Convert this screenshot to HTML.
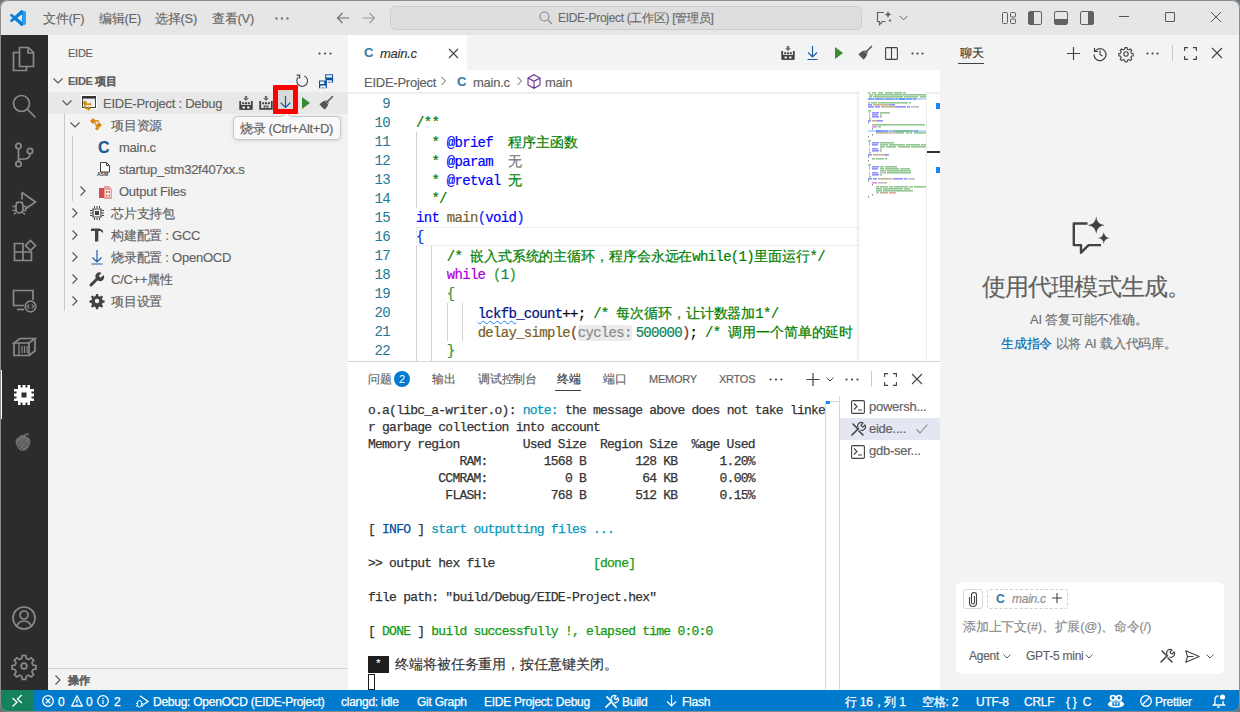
<!DOCTYPE html>
<html><head><meta charset="utf-8">
<style>
*{margin:0;padding:0;box-sizing:border-box}
html,body{width:1240px;height:712px;overflow:hidden;background:#fff;font-family:"Liberation Sans",sans-serif;font-size:13px;color:#616161}
.a{position:absolute}
.t{position:absolute;white-space:nowrap;line-height:1;letter-spacing:-0.25px;-webkit-text-stroke:0.15px}
svg{position:absolute;overflow:visible}
#title{left:0;top:0;width:1240px;height:35px;background:#e6e6e6}
#act{left:0;top:35px;width:48px;height:655px;background:#2c2c2c}
#side{left:48px;top:35px;width:300px;height:655px;background:#f3f3f3}
#tabs{left:348px;top:35px;width:592px;height:35px;background:#f3f3f3}
#editor{left:348px;top:70px;width:592px;height:292px;background:#fff}
#panel{left:348px;top:361px;width:592px;height:329px;background:#fff;border-top:1px solid #d4d4d4}
#chat{left:940px;top:35px;width:300px;height:655px;background:#f3f3f3}
#status{left:0;top:690px;width:1240px;height:22px;background:#007acc;color:#fff}
.ln{position:absolute;margin-top:1px;left:0;width:42px;text-align:right;font-family:"Liberation Mono",monospace;font-size:14px;line-height:19px;letter-spacing:-0.7px;white-space:pre}
.code{position:absolute;margin-top:1px;-webkit-text-stroke:0.2px;left:68px;font-family:"Liberation Mono",monospace;font-size:14px;line-height:19px;letter-spacing:-0.7px;white-space:pre;color:#000}
.cj{letter-spacing:-0.1px;font-family:"Liberation Sans",sans-serif}
.term{position:absolute;margin-top:1px;-webkit-text-stroke:0.25px;left:20px;font-family:"Liberation Mono",monospace;font-size:13px;line-height:17px;letter-spacing:-0.77px;white-space:pre;color:#333}
.mono{font-family:"Liberation Mono",monospace}
</style></head><body>
<div class="a" id="title">
<svg style="left:10px;top:10px" width="16" height="16" viewBox="0 0 100 100"><path fill="#0a80d8" d="M96.5 10.8 75.9.9a6.2 6.2 0 0 0-7.1 1.2L29.4 38 12.2 25a4.1 4.1 0 0 0-5.3.2L1.4 30.3a4.1 4.1 0 0 0 0 6.1L16.3 50 1.4 63.6a4.1 4.1 0 0 0 0 6.1l5.5 5a4.1 4.1 0 0 0 5.3.2l17.2-13L68.8 97.9a6.2 6.2 0 0 0 7.1 1.2l20.6-9.9a6.2 6.2 0 0 0 3.5-5.6V16.4a6.2 6.2 0 0 0-3.5-5.6zM75 72.7 45.1 50 75 27.3z"/><path fill="#007acc" d="M96.5 10.8 75.9.9a6.2 6.2 0 0 0-7.1 1.2L29.4 38 12.2 25a4.1 4.1 0 0 0-5.3.2L1.4 30.3a4.1 4.1 0 0 0 0 6.1L16.3 50 1.4 63.6a4.1 4.1 0 0 0 0 6.1l5.5 5a4.1 4.1 0 0 0 5.3.2l17.2-13L68.8 97.9a6.2 6.2 0 0 0 7.1 1.2l20.6-9.9a6.2 6.2 0 0 0 3.5-5.6V16.4a6.2 6.2 0 0 0-3.5-5.6zM75 72.7 45.1 50 75 27.3z" opacity=".0"/><path fill="#24a4f3" d="M75.9 99.1a6.2 6.2 0 0 0 3.5-.9V1.8a6.2 6.2 0 0 0-3.5-.9l20.6 9.9a6.2 6.2 0 0 1 3.5 5.6v67.2a6.2 6.2 0 0 1-3.5 5.6z"/></svg>
<div class="t" style="left:43px;top:12px;color:#666">文件(F)</div>
<div class="t" style="left:99px;top:12px;color:#666">编辑(E)</div>
<div class="t" style="left:155px;top:12px;color:#666">选择(S)</div>
<div class="t" style="left:212px;top:12px;color:#666">查看(V)</div>
<svg style="left:275px;top:17px" width="14" height="3"><circle cx="1.5" cy="1.5" r="1.2" fill="#777"/><circle cx="7" cy="1.5" r="1.2" fill="#777"/><circle cx="12.5" cy="1.5" r="1.2" fill="#777"/></svg>
<svg style="left:336px;top:11px" width="14" height="14" viewBox="0 0 14 14"><path d="M13 7H1.5M6.5 2 1.5 7l5 5" fill="none" stroke="#6b6b6b" stroke-width="1.1"/></svg>
<svg style="left:362px;top:11px" width="14" height="14" viewBox="0 0 14 14"><path d="M1 7h11.5M7.5 2l5 5-5 5" fill="none" stroke="#9a9a9a" stroke-width="1.1"/></svg>
<div class="a" style="left:390px;top:6px;width:472px;height:24px;border:1px solid #cdcdcd;border-radius:6px;background:#dedede"></div>
<svg style="left:539px;top:11px" width="14" height="14" viewBox="0 0 14 14"><circle cx="5.5" cy="5.5" r="4.5" fill="none" stroke="#888" stroke-width="1.1"/><path d="M8.8 8.8 13 13" stroke="#888" stroke-width="1.2"/></svg>
<div class="t" style="left:558px;top:12px;color:#6a6a6a;font-size:12px;letter-spacing:-0.3px">EIDE-Project (工作区) [管理员]</div>
<svg style="left:876px;top:10px" width="17" height="16" viewBox="0 0 17 16"><path d="M8 2.5H1.5v9h2v3l3-3H9.5" fill="none" stroke="#616161" stroke-width="1.2"/><path d="M12 1l1 2.5 2.5 1-2.5 1-1 2.5-1-2.5L8.5 4.5l2.5-1z" fill="#616161"/><path d="M14 8.5l.6 1.4 1.4.6-1.4.6-.6 1.4-.6-1.4-1.4-.6 1.4-.6z" fill="#616161"/></svg>
<svg style="left:899px;top:15px" width="9" height="6" viewBox="0 0 9 6"><path d="M.5 .8 4.5 4.8 8.5.8" fill="none" stroke="#616161" stroke-width="1"/></svg>
<svg style="left:1002px;top:12px" width="14" height="12" viewBox="0 0 14 12"><rect x=".5" y=".5" width="5" height="11" rx="1" fill="none" stroke="#616161"/><rect x="8.5" y=".5" width="5" height="4.5" rx="1" fill="none" stroke="#616161"/><rect x="8.5" y="7" width="5" height="4.5" rx="1" fill="none" stroke="#616161"/></svg>
<svg style="left:1028px;top:11px" width="14" height="14" viewBox="0 0 14 14"><rect x=".5" y=".5" width="13" height="13" rx="1.5" fill="none" stroke="#616161"/><rect x="1" y="1" width="5" height="12" fill="#616161"/></svg>
<svg style="left:1054px;top:11px" width="14" height="14" viewBox="0 0 14 14"><rect x=".5" y=".5" width="13" height="13" rx="1.5" fill="none" stroke="#616161"/><rect x="1" y="8" width="12" height="5" fill="#616161"/></svg>
<svg style="left:1080px;top:11px" width="14" height="14" viewBox="0 0 14 14"><rect x=".5" y=".5" width="13" height="13" rx="1.5" fill="none" stroke="#616161"/><rect x="8" y="1" width="5" height="12" fill="#616161"/></svg>
<div class="a" style="left:1119px;top:16px;width:10px;height:1px;background:#555"></div>
<div class="a" style="left:1165px;top:12px;width:10px;height:10px;border:1px solid #555;border-radius:1px"></div>
<svg style="left:1211px;top:12px" width="10" height="10" viewBox="0 0 10 10"><path d="M0 0 10 10M10 0 0 10" stroke="#555" stroke-width="1"/></svg>
</div>
<div class="a" id="act">
<svg style="left:12px;top:11px" width="24" height="26" viewBox="0 0 24 26"><path d="M7.5 6.5H1.5v18h13v-4" fill="none" stroke="#8a8a8a" stroke-width="1.7"/><path d="M7.5 1.5h9l5 5v14h-14z" fill="none" stroke="#8a8a8a" stroke-width="1.7"/><path d="M16 1.5v5.5h5.5" fill="none" stroke="#8a8a8a" stroke-width="1.7"/></svg>
<svg style="left:12px;top:59px" width="25" height="25" viewBox="0 0 25 25"><circle cx="9.5" cy="9.5" r="8" fill="none" stroke="#8a8a8a" stroke-width="1.7"/><path d="M15.2 15.2 23.5 23.5" fill="none" stroke="#8a8a8a" stroke-width="1.7" stroke-width="2"/></svg>
<svg style="left:12px;top:107px" width="24" height="26" viewBox="0 0 24 26"><circle cx="6.5" cy="4" r="2.7" fill="none" stroke="#8a8a8a" stroke-width="1.7"/><circle cx="6.5" cy="22" r="2.7" fill="none" stroke="#8a8a8a" stroke-width="1.7"/><circle cx="18" cy="9" r="2.7" fill="none" stroke="#8a8a8a" stroke-width="1.7"/><path d="M6.5 6.7v12.6M18 11.7c0 4-3 5.3-6 5.3h-2c-2 0-3.5 1-3.5 2.3" fill="none" stroke="#8a8a8a" stroke-width="1.7"/></svg>
<svg style="left:11px;top:156px" width="26" height="26" viewBox="0 0 26 26"><path d="M11 1.5l13.5 9.5-10.5 7.2" fill="none" stroke="#8a8a8a" stroke-width="1.7"/><path d="M11 1.5v7" fill="none" stroke="#8a8a8a" stroke-width="1.7"/><path d="M5 14.5a3.5 3.5 0 0 1 7 0v4a3.5 3.5 0 0 1-7 0z" fill="none" stroke="#8a8a8a" stroke-width="1.7"/><path d="M6.5 12.5l-1.5-1.5M10.5 12.5l1.5-1.5M1.5 15.5h3.5M12 15.5h3.5M1.5 19.5h3.5M12 19.5h3.5M3 23.5l2-2M14 23.5l-2-2" fill="none" stroke="#8a8a8a" stroke-width="1.7"/></svg>
<svg style="left:13px;top:204px" width="24" height="24" viewBox="0 0 24 24"><path d="M1.5 4.5h8.5v8.5h-8.5zM1.5 13h8.5v8.5h-8.5zM10 13h8.5v8.5h-8.5z" fill="none" stroke="#8a8a8a" stroke-width="1.7"/><path d="M17.5 1.5l5 5-5 5-5-5z" fill="none" stroke="#8a8a8a" stroke-width="1.7"/></svg>
<svg style="left:12px;top:253px" width="25" height="25" viewBox="0 0 25 25"><path d="M21 12V2.5H1.5v15H12" fill="none" stroke="#8a8a8a" stroke-width="1.7"/><path d="M5 21.5h7" fill="none" stroke="#8a8a8a" stroke-width="1.7"/><circle cx="18.5" cy="18.5" r="5.3" fill="none" stroke="#8a8a8a" stroke-width="1.7"/><path d="M17.3 16.5l-2 2 2 2M19.7 16.5l2 2-2 2" fill="none" stroke="#8a8a8a" stroke-width="1.1"/></svg>
<svg style="left:13px;top:302px" width="23" height="20" viewBox="0 0 23 20"><path d="M1 6l6-4.5h15l-6 4.5z M1 6v12.5h15V6 M16 18.5l6-4.5V1.5" fill="none" stroke="#8a8a8a" stroke-width="1.7"/><path d="M6 6v12.5M9 9v7M11.5 9v7M14 9v7" fill="none" stroke="#8a8a8a" stroke-width="1.2"/></svg>
<div class="a" style="left:0;top:335px;width:2px;height:49px;background:#fff"></div>
<svg style="left:12px;top:348px" width="24" height="24" viewBox="0 0 24 24"><path fill="#fff" fill-rule="evenodd" d="M6 2h2.6v2.5h1.9V2h3v2.5h1.9V2H18v4h4v2.6h-2.5v1.9H22v3h-2.5v1.9H22V18h-4v4h-2.6v-2.5h-1.9V22h-3v-2.5H8.6V22H6v-4H2v-2.6h2.5v-1.9H2v-3h2.5V8.6H2V6h4z M9.5 9.5v5h5v-5z"/></svg>
<svg style="left:14px;top:398px" width="18" height="19" viewBox="0 0 18 19"><path d="M5 4c2-3 6-3 8 0 3 1 4 4 3 7-1 4-4 7-7 7s-6-3-7-7c-1-3 0-6 3-7z" fill="#6e6e6e"/><path d="M9 4c1-2 3-3 6-3" stroke="#6e6e6e" stroke-width="1.5" fill="none"/><path d="M4 8l9 8M7 6l8 7M3 12l6 5M8 6l-5 6M12 6l-8 9M15 8l-8 9" stroke="#4a4a4a" stroke-width=".7"/></svg>
<svg style="left:12px;top:571px" width="24" height="24" viewBox="0 0 24 24"><circle cx="12" cy="12" r="11" fill="none" stroke="#8a8a8a" stroke-width="1.7"/><circle cx="12" cy="9" r="4" fill="none" stroke="#8a8a8a" stroke-width="1.7"/><path d="M5 19.5c1.5-3 4-4.5 7-4.5s5.5 1.5 7 4.5" fill="none" stroke="#8a8a8a" stroke-width="1.7"/></svg>
<svg style="left:12px;top:619px" width="24" height="24" viewBox="0 0 24 24"><path d="M10.3 1.5h3.4l.6 3 2.3 1 2.6-1.7 2.4 2.4-1.7 2.6 1 2.3 3 .6v3.4l-3 .6-1 2.3 1.7 2.6-2.4 2.4-2.6-1.7-2.3 1-.6 3h-3.4l-.6-3-2.3-1-2.6 1.7-2.4-2.4 1.7-2.6-1-2.3-3-.6v-3.4l3-.6 1-2.3-1.7-2.6 2.4-2.4 2.6 1.7 2.3-1z" fill="none" stroke="#8a8a8a" stroke-width="1.7"/><circle cx="12" cy="12" r="2.8" fill="none" stroke="#8a8a8a" stroke-width="1.7"/></svg></div>
<div class="a" id="side">
<div class="t" style="left:20px;top:13px;font-size:11px;color:#616161">EIDE</div>
<svg style="left:270px;top:17px" width="14" height="3"><circle cx="1.5" cy="1.5" r="1.1" fill="#424242"/><circle cx="7" cy="1.5" r="1.1" fill="#424242"/><circle cx="12.5" cy="1.5" r="1.1" fill="#424242"/></svg>
<svg style="left:4px;top:40px" width="12" height="12" viewBox="0 0 12 12"><path d="M1.5 3.5 6 8l4.5-4.5" fill="none" stroke="#555" stroke-width="1.15"/></svg>
<div class="t" style="left:20px;top:41px;font-size:11px;font-weight:bold;color:#616161">EIDE 项目</div>
<svg style="left:247px;top:39px" width="14" height="14" viewBox="0 0 14 14"><path d="M9.2 1.9A5.4 5.4 0 1 1 3.3 3.2" fill="none" stroke="#424242" stroke-width="1.1"/><path d="M1.6 1.2H4.6V4.4" fill="none" stroke="#424242" stroke-width="1.3"/></svg>
<svg style="left:271px;top:39px" width="15" height="15" viewBox="0 0 15 15"><path fill="#0a4fa0" d="M6.1.3h8v8.3h-8z"/><path fill="#f3f3f3" d="M7.1 1.3h6v2.2h-6zM7.4 6.2h5.4v2.4H7.4z"/><circle cx="10.1" cy="8.1" r=".6" fill="#0a4fa0"/><path fill="#f3f3f3" d="M-.5 5.4h7.6v1h1.6v9H-.5z"/><path fill="#0a4fa0" d="M0 6.4h5.2v1H1v2.5h6.9v4.4H0z"/><path fill="#0a4fa0" d="M5.2 6.4H8v3.5H5.2z"/><path fill="#f3f3f3" d="M1.3 11.5h5.4v2.8H1.3z"/><circle cx="4" cy="13.6" r=".6" fill="#0a4fa0"/></svg>
<div class="a" style="left:0;top:57px;width:300px;height:22px;background:#e8e8e8"></div>
<svg style="left:13px;top:62px" width="12" height="12" viewBox="0 0 12 12"><path d="M1.5 3.5 6 8l4.5-4.5" fill="none" stroke="#555" stroke-width="1.15"/></svg>
<svg style="left:33px;top:60px" width="16" height="17" viewBox="0 0 16 17"><rect x="0" y="0" width="16" height="14.5" fill="#fff"/><rect x="1.5" y="1.5" width="13" height="11" fill="#eee" stroke="#424242" stroke-width="1"/><rect x="1" y="1" width="14" height="2.6" fill="#333"/><path d="M4 5.6 6.3 7.9 4 10.2 1.7 7.9z M7.7 11.3 9.9 13.5 7.7 15.7 5.5 13.5z" fill="#d7870b"/><path d="M4 8v3.5c0 1.2 1 2 2 2h1.5M5 9.2h4.8" fill="none" stroke="#d7870b" stroke-width="1.6"/><path d="M8.6 7.6l2 1.6-2 1.6z" fill="#d7870b"/></svg>
<div class="t" style="left:55px;top:62px;color:#616161">EIDE-Project : Debug</div>
<svg style="left:191px;top:61px" width="14" height="14" viewBox="0 0 14 14"><path d="M.3 5h1.8v4.2h9.8V5h1.8v8.8H.3z" fill="#424242"/><path d="M2 9h10v4.8H2z" fill="#424242"/><path d="M3.2 6.2h2v2h-2zM6 6.2h2v2h-2zM8.8 6.2h2v2h-2z" fill="#424242"/><path d="M3.6 10.4h2.2v2.2H3.6zM8.2 10.4h2.2v2.2H8.2z" fill="#fff"/><path d="M5.8 0h2.4v2.3h1.7L7 5 4.1 2.3h1.7z" fill="#6e6e6e"/></svg>
<svg style="left:211px;top:61px" width="14" height="14" viewBox="0 0 14 14"><path d="M.3 5h1.8v7h9.8V5h1.8v8.8H.3z" fill="#424242"/><path d="M3.2 6.2h2v2h-2zM6 6.2h2v2h-2zM8.8 6.2h2v2h-2zM4.6 9.4h2v2h-2zM7.4 9.4h2v2h-2z" fill="#424242"/><path d="M5.8 0h2.4v2.3h1.7L7 5 4.1 2.3h1.7z" fill="#6e6e6e"/></svg>
<div class="a" style="left:230px;top:55px;width:15px;height:19px;background:#d9d9d9"></div>
<svg style="left:232px;top:61px" width="11" height="12" viewBox="0 0 11 12"><path d="M5.5 0v11.5M.7 6.8 5.5 11.5l4.8-4.7" fill="none" stroke="#0e5ba8" stroke-width="1.2"/></svg>
<svg style="left:254px;top:62px" width="8" height="12" viewBox="0 0 8 12"><path d="M0 0 8 6 0 12z" fill="#388a34"/></svg>
<svg style="left:271px;top:61px" width="14" height="14" viewBox="0 0 14 14"><path d="M8.3 5.7 13.5.5" stroke="#555" stroke-width="1.6" stroke-linecap="round"/><path d="M7 4l3 3-.8.8-3-3z" fill="#555"/><path d="M5.8 4.8l3.4 3.4c-.5 2.2-2 4.2-3.8 5.3L.5 8.6C1.6 6.8 3.6 5.3 5.8 4.8z" fill="#555"/></svg>
<svg style="left:21px;top:84px" width="12" height="12" viewBox="0 0 12 12"><path d="M1.5 3.5 6 8l4.5-4.5" fill="none" stroke="#555" stroke-width="1.15"/></svg>
<svg style="left:42px;top:82px" width="14" height="14" viewBox="0 0 14 14"><path d="M3 1l3 3-3 3-3-3z M9 5l3 3-3 3-3-3z M7 9.5l2 2-2 2-2-2z" fill="#d7870b"/><path d="M3 4h6M5 5.5l2 5" stroke="#d7870b" stroke-width="1.3" fill="none"/></svg>
<div class="t" style="left:63px;top:84px;color:#616161">项目资源</div>
<div class="a" style="left:16px;top:78px;width:1px;height:198px;background:#c8c8c8"></div>
<div class="a" style="left:24px;top:101px;width:1px;height:65px;background:#c8c8c8"></div>
<div class="t" style="left:50px;top:105px;font-size:16px;font-weight:bold;color:#1e5b96;letter-spacing:0">C</div>
<div class="t" style="left:71px;top:106px;color:#616161">main.c</div>
<svg style="left:49px;top:127px" width="15" height="14" viewBox="0 0 15 14"><path d="M3.5.5h6l3 3V10h-9z" fill="#fff" stroke="#424242" stroke-width="1"/><path d="M9.5.5V3.5h3" fill="none" stroke="#424242"/><text x="0" y="13.6" font-size="5" font-weight="bold" fill="#424242" font-family="Liberation Sans">ASM</text></svg>
<div class="t" style="left:71px;top:128px;color:#616161">startup_stm32f407xx.s</div>
<svg style="left:29px;top:150px" width="12" height="12" viewBox="0 0 12 12"><path d="M3.5 1.5 8 6l-4.5 4.5" fill="none" stroke="#555" stroke-width="1.15"/></svg>
<svg style="left:51px;top:150px" width="14" height="14" viewBox="0 0 14 14"><path d="M0 3h6v10h-6z" fill="#d84b4b"/><path d="M5 1h5l3 3v10h-8z" fill="#e8a0a0"/><path d="M6.5 5h5v7h-5z" fill="#fff"/><path d="M7.5 6v2M9 6v2M10.5 6v2M7.5 9.5v2M9 9.5v2M10.5 9.5v2" stroke="#c0392b" stroke-width=".8"/></svg>
<div class="t" style="left:71px;top:150px;color:#616161">Output Files</div>
<svg style="left:21px;top:172px" width="12" height="12" viewBox="0 0 12 12"><path d="M3.5 1.5 8 6l-4.5 4.5" fill="none" stroke="#555" stroke-width="1.15"/></svg>
<svg style="left:42px;top:171px" width="14" height="14" viewBox="0 0 14 14"><path d="M3 3h8v8h-8z" fill="none" stroke="#424242" stroke-width="1.2"/><path d="M5 5h4v4h-4z" fill="#424242"/><path d="M4.5 0v2M7 0v2M9.5 0v2M4.5 12v2M7 12v2M9.5 12v2M0 4.5h2M0 7h2M0 9.5h2M12 4.5h2M12 7h2M12 9.5h2" stroke="#424242" stroke-width="1"/></svg>
<div class="t" style="left:63px;top:172px;color:#616161">芯片支持包</div>
<svg style="left:21px;top:194px" width="12" height="12" viewBox="0 0 12 12"><path d="M3.5 1.5 8 6l-4.5 4.5" fill="none" stroke="#555" stroke-width="1.15"/></svg>
<svg style="left:42px;top:193px" width="14" height="14" viewBox="0 0 14 14"><path d="M1 .5h8.5L13 2.5v2.5L10.5 3H8.3v10.5H5V3H1z" fill="#424242"/></svg>
<div class="t" style="left:63px;top:194px;color:#616161">构建配置 : GCC</div>
<svg style="left:21px;top:216px" width="12" height="12" viewBox="0 0 12 12"><path d="M3.5 1.5 8 6l-4.5 4.5" fill="none" stroke="#555" stroke-width="1.15"/></svg>
<svg style="left:42px;top:215px" width="14" height="15" viewBox="0 0 14 15"><path d="M7 0v12M2.5 7.5 7 12l4.5-4.5M1.5 14h11" fill="none" stroke="#1c5ea8" stroke-width="1.2"/></svg>
<div class="t" style="left:63px;top:216px;color:#616161">烧录配置 : OpenOCD</div>
<svg style="left:21px;top:238px" width="12" height="12" viewBox="0 0 12 12"><path d="M3.5 1.5 8 6l-4.5 4.5" fill="none" stroke="#555" stroke-width="1.15"/></svg>
<svg style="left:42px;top:237px" width="14" height="14" viewBox="0 0 14 14"><path d="M1 13 7 7" stroke="#424242" stroke-width="3" stroke-linecap="round"/><path d="M6 6.5a4 4 0 0 1 5.5-5.5l-2.5 2.5 .5 1.5 1.5.5 2.5-2.5a4 4 0 0 1-5.5 5.5z" fill="#424242"/></svg>
<div class="t" style="left:63px;top:238px;color:#616161">C/C++属性</div>
<svg style="left:21px;top:260px" width="12" height="12" viewBox="0 0 12 12"><path d="M3.5 1.5 8 6l-4.5 4.5" fill="none" stroke="#555" stroke-width="1.15"/></svg>
<svg style="left:42px;top:259px" width="14" height="14" viewBox="0 0 14 14"><path d="M6 0h2l.4 2 1.6.7 1.7-1.2 1.4 1.4-1.2 1.7.7 1.6 2 .4v2l-2 .4-.7 1.6 1.2 1.7-1.4 1.4-1.7-1.2-1.6.7-.4 2h-2l-.4-2-1.6-.7-1.7 1.2-1.4-1.4 1.2-1.7-.7-1.6-2-.4v-2l2-.4.7-1.6-1.2-1.7 1.4-1.4 1.7 1.2 1.6-.7z" fill="#424242"/><circle cx="7" cy="7" r="2.2" fill="#f3f3f3"/></svg>
<div class="t" style="left:63px;top:260px;color:#616161">项目设置</div>
<div class="a" style="left:0;top:633px;width:300px;height:1px;background:#d4d4d4"></div>
<svg style="left:4px;top:639px" width="12" height="12" viewBox="0 0 12 12"><path d="M3.5 1.5 8 6l-4.5 4.5" fill="none" stroke="#555" stroke-width="1.15"/></svg>
<div class="t" style="left:20px;top:640px;font-size:11px;font-weight:bold;color:#616161">操作</div>
<div class="a" style="left:185px;top:81px;width:108px;height:24px;background:#f8f8f8;border:1px solid #c8c8c8;border-radius:4px;box-shadow:0 1px 4px rgba(0,0,0,.12)"></div>
<div class="a" style="left:235px;top:78px;width:7px;height:7px;background:#f8f8f8;border-left:1px solid #c8c8c8;border-top:1px solid #c8c8c8;transform:rotate(45deg)"></div>
<div class="t" style="left:192px;top:87px;font-size:13px;letter-spacing:-0.35px;color:#616161">烧录 (Ctrl+Alt+D)</div>
<div class="a" style="left:225px;top:50px;width:25px;height:29px;border:5px solid #f00;border-radius:1px"></div>
</div>
<div class="a" id="tabs">
<div class="a" style="left:0;top:0;width:119px;height:35px;background:#fff"></div>
<div class="t" style="left:16px;top:11px;font-weight:bold;font-size:13px;color:#3c7ea6">C</div>
<div class="t" style="left:32px;top:12px;font-style:italic;color:#333">main.c</div>
<svg style="left:101px;top:14px" width="9" height="9" viewBox="0 0 9 9"><path d="M0 0 9 9M9 0 0 9" stroke="#424242" stroke-width="1.1"/></svg>
<svg style="left:433px;top:11px" width="14" height="14" viewBox="0 0 14 14"><path d="M.3 5h1.8v4.2h9.8V5h1.8v8.8H.3z" fill="#424242"/><path d="M2 9h10v4.8H2z" fill="#424242"/><path d="M3.2 6.2h2v2h-2zM6 6.2h2v2h-2zM8.8 6.2h2v2h-2z" fill="#424242"/><path d="M3.6 10.4h2.2v2.2H3.6zM8.2 10.4h2.2v2.2H8.2z" fill="#fff"/><path d="M5.8 0h2.4v2.3h1.7L7 5 4.1 2.3h1.7z" fill="#6e6e6e"/></svg>
<svg style="left:459px;top:11px" width="11" height="14" viewBox="0 0 11 14"><path d="M5.5 0v11M1 6.5 5.5 11 10 6.5M.5 13.5h10" fill="none" stroke="#1c5ea8" stroke-width="1.2"/></svg>
<svg style="left:487px;top:12px" width="8" height="12" viewBox="0 0 8 12"><path d="M0 0 8 6 0 12z" fill="#388a34"/></svg>
<svg style="left:510px;top:11px" width="14" height="14" viewBox="0 0 14 14"><path d="M8.3 5.7 13.5.5" stroke="#555" stroke-width="1.6" stroke-linecap="round"/><path d="M7 4l3 3-.8.8-3-3z" fill="#555"/><path d="M5.8 4.8l3.4 3.4c-.5 2.2-2 4.2-3.8 5.3L.5 8.6C1.6 6.8 3.6 5.3 5.8 4.8z" fill="#555"/></svg>
<svg style="left:537px;top:12px" width="13" height="13" viewBox="0 0 13 13"><rect x=".6" y=".6" width="11.8" height="11.8" rx="1" fill="none" stroke="#424242" stroke-width="1.1"/><path d="M6.5 .6v11.8" stroke="#424242" stroke-width="1.1"/></svg>
<svg style="left:563px;top:17px" width="13" height="3"><circle cx="1.5" cy="1.5" r="1.1" fill="#424242"/><circle cx="6.5" cy="1.5" r="1.1" fill="#424242"/><circle cx="11.5" cy="1.5" r="1.1" fill="#424242"/></svg>
</div>
<div class="a" id="editor">
<div class="t" style="left:16px;top:6px;color:#616161">EIDE-Project</div>
<svg style="left:92px;top:6px" width="8" height="10" viewBox="0 0 8 10"><path d="M1.5 1 5.5 5l-4 4" fill="none" stroke="#616161" stroke-width="1"/></svg>
<div class="t" style="left:109px;top:5px;font-weight:bold;font-size:13px;color:#3c7ea6">C</div>
<div class="t" style="left:125px;top:6px;color:#616161">main.c</div>
<svg style="left:168px;top:6px" width="8" height="10" viewBox="0 0 8 10"><path d="M1.5 1 5.5 5l-4 4" fill="none" stroke="#616161" stroke-width="1"/></svg>
<svg style="left:179px;top:4px" width="14" height="15" viewBox="0 0 14 15"><path d="M7 .7 13 4v7L7 14.3 1 11V4z M1 4l6 3.3L13 4M7 7.3v7" fill="none" stroke="#652d90" stroke-width="1.1"/></svg>
<div class="t" style="left:197px;top:6px;color:#616161">main</div>
<div class="a" style="left:0;top:22px;width:592px;height:3px;background:linear-gradient(#e6e6e6,rgba(255,255,255,0))"></div>
<div class="a" style="left:68px;top:157px;width:443px;height:19px;border:1px solid #eeeeee;border-right:none"></div>
<div class="a" style="left:68px;top:62px;width:1px;height:76px;background:#d3d3d3"></div>
<div class="a" style="left:68px;top:176px;width:1px;height:115px;background:#d3d3d3"></div>
<div class="a" style="left:83px;top:176px;width:1px;height:115px;background:#d3d3d3"></div>
<div class="a" style="left:99px;top:233px;width:1px;height:38px;background:#d3d3d3"></div>
<div class="a" style="left:114px;top:233px;width:1px;height:38px;background:#d3d3d3"></div>
<div class="ln" style="top:24px;color:#237893">9</div>
<div class="code" style="top:24px"></div>
<div class="ln" style="top:43px;color:#237893">10</div>
<div class="code" style="top:43px"><span style="color:#008000">/**</span></div>
<div class="ln" style="top:62px;color:#237893">11</div>
<div class="code" style="top:62px"><span style="color:#008000">  * </span><span style="color:#0000ff">@brief</span><span style="color:#008000">  </span><span class="cj" style="color:#008000">程序主函数</span></div>
<div class="ln" style="top:81px;color:#237893">12</div>
<div class="code" style="top:81px"><span style="color:#008000">  * </span><span style="color:#0000ff">@param</span><span style="color:#008000">  </span><span class="cj" style="color:#777777">无</span></div>
<div class="ln" style="top:100px;color:#237893">13</div>
<div class="code" style="top:100px"><span style="color:#008000">  * </span><span style="color:#0000ff">@retval</span><span style="color:#008000"> </span><span class="cj" style="color:#008000">无</span></div>
<div class="ln" style="top:119px;color:#237893">14</div>
<div class="code" style="top:119px"><span style="color:#008000">  */</span></div>
<div class="ln" style="top:138px;color:#237893">15</div>
<div class="code" style="top:138px"><span style="color:#0000ff">int</span> <span style="color:#795e26">main</span><span style="color:#0431fa">(</span><span style="color:#0000ff">void</span><span style="color:#0431fa">)</span></div>
<div class="ln" style="top:157px;color:#237893">16</div>
<div class="code" style="top:157px"><span style="color:#0431fa">{</span></div>
<div class="ln" style="top:176px;color:#237893">17</div>
<div class="code" style="top:176px">    <span style="color:#008000">/* </span><span class="cj" style="color:#008000">嵌入式系统的主循环，程序会永远在</span><span style="color:#008000">while(1)</span><span class="cj" style="color:#008000">里面运行</span><span style="color:#008000">*/</span></div>
<div class="ln" style="top:195px;color:#237893">18</div>
<div class="code" style="top:195px">    <span style="color:#af00db">while</span> <span style="color:#319331">(</span><span style="color:#098658">1</span><span style="color:#319331">)</span></div>
<div class="ln" style="top:214px;color:#237893">19</div>
<div class="code" style="top:214px">    <span style="color:#319331">{</span></div>
<div class="ln" style="top:233px;color:#237893">20</div>
<div class="code" style="top:233px">        <span style="color:#001080;text-decoration:underline wavy #1a85ff;text-decoration-thickness:1px;text-underline-offset:2px">lckfb</span><span style="color:#001080">_count</span><span style="color:#000000">++;</span> <span style="color:#008000">/* </span><span class="cj" style="color:#008000">每次循环，让计数器加</span><span style="color:#008000">1*/</span></div>
<div class="ln" style="top:252px;color:#237893">21</div>
<div class="code" style="top:252px">        <span style="color:#795e26">delay_simple</span><span style="color:#7b3814">(</span><span style="color:#8a8a8a;background:#ececec;border-radius:2px;margin-right:4px">cycles:</span><span style="color:#098658">500000</span><span style="color:#7b3814">)</span><span style="color:#000000">;</span> <span style="color:#008000">/* </span><span class="cj" style="color:#008000">调用一个简单的延时，</span></div>
<div class="ln" style="top:271px;color:#237893">22</div>
<div class="code" style="top:271px">    <span style="color:#319331">}</span></div>
<div class="a" style="left:511px;top:22px;width:67px;height:270px;background:#fff;box-shadow:-3px 0 3px -2px rgba(0,0,0,.12)"></div>
<svg id="mm" style="left:520px;top:22px;opacity:.75;overflow:hidden" width="58" height="110"><rect x="0" y="0" width="2" height="1.6" fill="#6fb56f"/><rect x="4" y="0" width="4" height="1.6" fill="#6fb56f"/><rect x="10" y="0" width="5" height="1.6" fill="#6fb56f"/><rect x="17" y="0" width="8" height="1.6" fill="#6fb56f"/><rect x="26" y="0" width="8" height="1.6" fill="#6fb56f"/><rect x="35" y="0" width="3" height="1.6" fill="#6fb56f"/><rect x="1" y="2" width="4" height="1.6" fill="#6fb56f"/><rect x="6" y="2" width="58" height="1.6" fill="#6fb56f"/><rect x="1" y="4" width="3" height="1.6" fill="#6fb56f"/><rect x="5" y="4" width="30" height="1.6" fill="#6fb56f"/><rect x="36" y="4" width="14" height="1.6" fill="#6fb56f"/><rect x="52" y="4" width="8" height="1.6" fill="#6fb56f"/><rect x="0" y="6" width="58" height="2" fill="#a8ceff"/><rect x="0" y="6" width="6" height="2" fill="#4a7cff" opacity=".8"/><rect x="7" y="6" width="9" height="2" fill="#4a7cff" opacity=".8"/><rect x="17" y="6" width="9" height="2" fill="#4a7cff" opacity=".8"/><rect x="27" y="6" width="3" height="2" fill="#4a7cff" opacity=".8"/><rect x="31" y="6" width="6" height="2" fill="#1a5fff" opacity=".8"/><rect x="38" y="6" width="6" height="2" fill="#4a7cff" opacity=".8"/><rect x="45" y="6" width="3" height="2" fill="#4a7cff" opacity=".8"/><rect x="0" y="10" width="2" height="1.6" fill="#6fb56f"/><rect x="3" y="10" width="6" height="1.6" fill="#6fb56f"/><rect x="10" y="10" width="30" height="1.6" fill="#6fb56f"/><rect x="41" y="10" width="2" height="1.6" fill="#6fb56f"/><rect x="0" y="12" width="4" height="1.6" fill="#6b6bff"/><rect x="5" y="12" width="17" height="1.6" fill="#b39a70"/><rect x="22" y="12" width="5" height="1.6" fill="#6b6bff"/><rect x="0" y="14" width="6" height="1.6" fill="#6b6bff"/><rect x="7" y="14" width="5" height="1.6" fill="#6b6bff"/><rect x="13" y="14" width="14" height="1.6" fill="#b39a70"/><rect x="27" y="14" width="11" height="1.6" fill="#6b6bff"/><rect x="39" y="14" width="3" height="1.6" fill="#6b6bff"/><rect x="43" y="14" width="8" height="1.6" fill="#aaaaaa"/><rect x="0" y="18" width="3" height="1.6" fill="#6fb56f"/><rect x="1" y="20" width="1" height="1.6" fill="#6fb56f"/><rect x="4" y="20" width="7" height="1.6" fill="#6b6bff"/><rect x="12" y="20" width="10" height="1.6" fill="#6fb56f"/><rect x="1" y="22" width="1" height="1.6" fill="#6fb56f"/><rect x="4" y="22" width="6" height="1.6" fill="#6b6bff"/><rect x="12" y="22" width="2" height="1.6" fill="#aaaaaa"/><rect x="1" y="24" width="1" height="1.6" fill="#6fb56f"/><rect x="4" y="24" width="7" height="1.6" fill="#6b6bff"/><rect x="12" y="24" width="2" height="1.6" fill="#6fb56f"/><rect x="1" y="26" width="2" height="1.6" fill="#6fb56f"/><rect x="0" y="28" width="3" height="1.6" fill="#6b6bff"/><rect x="4" y="28" width="5" height="1.6" fill="#b39a70"/><rect x="9" y="28" width="6" height="1.6" fill="#6b6bff"/><rect x="0" y="30" width="1" height="1.6" fill="#666"/><rect x="4" y="32" width="3" height="1.6" fill="#6fb56f"/><rect x="7" y="32" width="50" height="1.6" fill="#6fb56f"/><rect x="4" y="34" width="5" height="1.6" fill="#d070e8"/><rect x="10" y="34" width="3" height="1.6" fill="#6fb56f"/><rect x="4" y="36" width="1" height="1.6" fill="#666"/><rect x="0" y="38" width="58" height="2" fill="#a8ceff"/><rect x="8" y="38" width="5" height="2" fill="#1a5fff" opacity=".8"/><rect x="13" y="38" width="7" height="2" fill="#4a7cff" opacity=".8"/><rect x="21" y="38" width="3" height="2" fill="#6fb56f" opacity=".8"/><rect x="25" y="38" width="20" height="2" fill="#4a9c6f" opacity=".8"/><rect x="46" y="38" width="4" height="2" fill="#4a7cff" opacity=".8"/><rect x="8" y="40" width="12" height="1.6" fill="#b39a70"/><rect x="20" y="40" width="8" height="1.6" fill="#aaaaaa"/><rect x="28" y="40" width="8" height="1.6" fill="#6fb56f"/><rect x="38" y="40" width="3" height="1.6" fill="#6fb56f"/><rect x="42" y="40" width="2" height="1.6" fill="#6fb56f"/><rect x="46" y="40" width="12" height="1.6" fill="#6fb56f"/><rect x="4" y="42" width="1" height="1.6" fill="#666"/><rect x="0" y="44" width="1" height="1.6" fill="#666"/><rect x="0" y="48" width="3" height="1.6" fill="#6fb56f"/><rect x="1" y="50" width="1" height="1.6" fill="#6fb56f"/><rect x="4" y="50" width="7" height="1.6" fill="#6b6bff"/><rect x="12" y="50" width="14" height="1.6" fill="#6fb56f"/><rect x="1" y="52" width="1" height="1.6" fill="#6fb56f"/><rect x="4" y="52" width="6" height="1.6" fill="#6b6bff"/><rect x="12" y="52" width="8" height="1.6" fill="#6fb56f"/><rect x="21" y="52" width="16" height="1.6" fill="#6fb56f"/><rect x="38" y="52" width="14" height="1.6" fill="#6fb56f"/><rect x="53" y="52" width="6" height="1.6" fill="#6fb56f"/><rect x="12" y="54" width="5" height="1.6" fill="#6fb56f"/><rect x="18" y="54" width="10" height="1.6" fill="#6fb56f"/><rect x="30" y="54" width="12" height="1.6" fill="#6fb56f"/><rect x="43" y="54" width="15" height="1.6" fill="#6fb56f"/><rect x="1" y="56" width="1" height="1.6" fill="#6fb56f"/><rect x="4" y="56" width="6" height="1.6" fill="#6b6bff"/><rect x="12" y="56" width="2" height="1.6" fill="#aaaaaa"/><rect x="1" y="58" width="1" height="1.6" fill="#6fb56f"/><rect x="4" y="58" width="7" height="1.6" fill="#6b6bff"/><rect x="12" y="58" width="2" height="1.6" fill="#6fb56f"/><rect x="1" y="60" width="2" height="1.6" fill="#6fb56f"/><rect x="0" y="62" width="4" height="1.6" fill="#6b6bff"/><rect x="5" y="62" width="14" height="1.6" fill="#b39a70"/><rect x="17" y="62" width="4" height="1.6" fill="#6b6bff"/><rect x="0" y="64" width="1" height="1.6" fill="#666"/><rect x="4" y="66" width="3" height="1.6" fill="#6fb56f"/><rect x="8" y="66" width="8" height="1.6" fill="#6fb56f"/><rect x="17" y="66" width="2" height="1.6" fill="#6fb56f"/><rect x="0" y="68" width="1" height="1.6" fill="#666"/><rect x="0" y="72" width="3" height="1.6" fill="#6fb56f"/><rect x="1" y="74" width="1" height="1.6" fill="#6fb56f"/><rect x="4" y="74" width="7" height="1.6" fill="#6b6bff"/><rect x="12" y="74" width="4" height="1.6" fill="#6fb56f"/><rect x="17" y="74" width="12" height="1.6" fill="#6fb56f"/><rect x="1" y="76" width="1" height="1.6" fill="#6fb56f"/><rect x="4" y="76" width="6" height="1.6" fill="#6b6bff"/><rect x="12" y="76" width="4" height="1.6" fill="#6fb56f"/><rect x="17" y="76" width="14" height="1.6" fill="#6fb56f"/><rect x="32" y="76" width="10" height="1.6" fill="#6fb56f"/><rect x="12" y="78" width="6" height="1.6" fill="#6fb56f"/><rect x="19" y="78" width="24" height="1.6" fill="#6fb56f"/><rect x="1" y="80" width="1" height="1.6" fill="#6fb56f"/><rect x="4" y="80" width="6" height="1.6" fill="#6b6bff"/><rect x="12" y="80" width="6" height="1.6" fill="#aaaaaa"/><rect x="19" y="80" width="24" height="1.6" fill="#6fb56f"/><rect x="1" y="82" width="1" height="1.6" fill="#6fb56f"/><rect x="4" y="82" width="7" height="1.6" fill="#6b6bff"/><rect x="12" y="82" width="2" height="1.6" fill="#6fb56f"/><rect x="1" y="84" width="2" height="1.6" fill="#6fb56f"/><rect x="0" y="86" width="4" height="1.6" fill="#6b6bff"/><rect x="5" y="86" width="4" height="1.6" fill="#6b6bff"/><rect x="10" y="86" width="14" height="1.6" fill="#b39a70"/><rect x="25" y="86" width="10" height="1.6" fill="#6b6bff"/><rect x="36" y="86" width="3" height="1.6" fill="#6b6bff"/><rect x="40" y="86" width="7" height="1.6" fill="#aaaaaa"/><rect x="0" y="88" width="1" height="1.6" fill="#666"/><rect x="4" y="90" width="5" height="1.6" fill="#d070e8"/><rect x="10" y="90" width="9" height="1.6" fill="#aaaaaa"/><rect x="4" y="92" width="1" height="1.6" fill="#666"/><rect x="8" y="94" width="3" height="1.6" fill="#6fb56f"/><rect x="12" y="94" width="8" height="1.6" fill="#6fb56f"/><rect x="21" y="94" width="4" height="1.6" fill="#6fb56f"/><rect x="26" y="94" width="14" height="1.6" fill="#6fb56f"/><rect x="41" y="94" width="4" height="1.6" fill="#6fb56f"/><rect x="46" y="94" width="12" height="1.6" fill="#6fb56f"/><rect x="8" y="96" width="6" height="1.6" fill="#6fb56f"/><rect x="15" y="96" width="20" height="1.6" fill="#6fb56f"/><rect x="36" y="96" width="6" height="1.6" fill="#6fb56f"/><rect x="8" y="98" width="6" height="1.6" fill="#6fb56f"/><rect x="15" y="98" width="30" height="1.6" fill="#6fb56f"/><rect x="8" y="100" width="3" height="1.6" fill="#aaaaaa"/><rect x="12" y="100" width="8" height="1.6" fill="#b39a70"/><rect x="21" y="100" width="7" height="1.6" fill="#d88"/><rect x="4" y="102" width="1" height="1.6" fill="#666"/><rect x="0" y="104" width="1" height="1.6" fill="#666"/></svg>
<div class="a" style="left:578px;top:22px;width:1px;height:270px;background:#ececec"></div>
<div class="a" style="left:588px;top:33px;width:4px;height:6px;background:#1a85ff"></div>
<div class="a" style="left:588px;top:97px;width:4px;height:6px;background:#1a85ff"></div>
<div class="a" style="left:579px;top:81px;width:13px;height:2px;background:#333"></div>
</div>
<div class="a" id="panel">
<div class="t" style="left:20px;top:11px;color:#616161;font-size:12px">问题</div>
<div class="a" style="left:46px;top:9px;width:16px;height:16px;border-radius:8px;background:#007acc;color:#fff;font-size:11px;text-align:center;line-height:16px">2</div>
<div class="t" style="left:84px;top:11px;color:#616161;font-size:12px">输出</div>
<div class="t" style="left:130px;top:11px;color:#616161;font-size:12px">调试控制台</div>
<div class="t" style="left:209px;top:11px;color:#333;font-size:12px">终端</div>
<div class="a" style="left:207px;top:28px;width:26px;height:1px;background:#424242"></div>
<div class="t" style="left:255px;top:11px;color:#616161;font-size:12px">端口</div>
<div class="t" style="left:301px;top:12px;color:#616161;font-size:11px">MEMORY</div>
<div class="t" style="left:371px;top:12px;color:#616161;font-size:11px">XRTOS</div>
<svg style="left:421px;top:16px" width="14" height="3"><circle cx="1.5" cy="1.5" r="1.1" fill="#424242"/><circle cx="7" cy="1.5" r="1.1" fill="#424242"/><circle cx="12.5" cy="1.5" r="1.1" fill="#424242"/></svg>
<svg style="left:458px;top:11px" width="14" height="13" viewBox="0 0 14 13"><path d="M7 0v13M.5 6.5h13" stroke="#424242" stroke-width="1.2"/></svg>
<svg style="left:478px;top:15px" width="8" height="5" viewBox="0 0 8 5"><path d="M.5.5 4 4 7.5.5" fill="none" stroke="#424242" stroke-width="1"/></svg>
<svg style="left:497px;top:16px" width="14" height="3"><circle cx="1.5" cy="1.5" r="1.1" fill="#424242"/><circle cx="7" cy="1.5" r="1.1" fill="#424242"/><circle cx="12.5" cy="1.5" r="1.1" fill="#424242"/></svg>
<div class="a" style="left:523px;top:9px;width:1px;height:16px;background:#c8c8c8"></div>
<svg style="left:536px;top:11px" width="13" height="13" viewBox="0 0 13 13"><path d="M.6 4V.6H4M9 .6h3.4V4M12.4 9v3.4H9M4 12.4H.6V9" fill="none" stroke="#424242" stroke-width="1.1"/></svg>
<svg style="left:564px;top:12px" width="10" height="10" viewBox="0 0 10 10"><path d="M0 0 10 10M10 0 0 10" stroke="#424242" stroke-width="1.1"/></svg>
<div class="term" style="top:39px"><span style="color:#333333">o.a(libc_a-writer.o): </span><span style="color:#0598bc">note:</span><span style="color:#333333"> the message above does not take linke</span></div>
<div class="term" style="top:56px"><span style="color:#333333">r garbage collection into account</span></div>
<div class="term" style="top:73px"><span style="color:#333333">Memory region         Used Size  Region Size  %age Used</span></div>
<div class="term" style="top:90px"><span style="color:#333333">             RAM:        1568 B       128 KB      1.20%</span></div>
<div class="term" style="top:107px"><span style="color:#333333">          CCMRAM:           0 B        64 KB      0.00%</span></div>
<div class="term" style="top:124px"><span style="color:#333333">           FLASH:         768 B       512 KB      0.15%</span></div>
<div class="term" style="top:141px"></div>
<div class="term" style="top:158px"><span style="color:#333333">[ </span><span style="color:#0451a5">INFO</span><span style="color:#333333"> ] </span><span style="color:#0598bc">start outputting files ...</span></div>
<div class="term" style="top:175px"></div>
<div class="term" style="top:192px"><span style="color:#333333">>> output hex file              </span><span style="color:#119a11">[done]</span></div>
<div class="term" style="top:209px"></div>
<div class="term" style="top:226px"><span style="color:#333333">file path: "build/Debug/EIDE-Project.hex"</span></div>
<div class="term" style="top:243px"></div>
<div class="term" style="top:260px"><span style="color:#333333">[ </span><span style="color:#119a11">DONE</span><span style="color:#333333"> ] </span><span style="color:#119a11">build successfully !, elapsed time 0:0:0</span></div>
<div class="a" style="left:20px;top:294px;width:21px;height:17px;background:#1e1e1e"></div>
<div class="t" style="left:27px;top:297px;color:#fff;font-size:11px;font-family:'Liberation Mono'">*</div>
<div class="t" style="left:47px;top:295px;color:#333;font-size:14px;letter-spacing:-0.1px">终端将被任务重用，按任意键关闭。</div>
<div class="a" style="left:20px;top:312px;width:7px;height:16px;border:1px solid #1e1e1e"></div>
<div class="a" style="left:477px;top:39px;width:1px;height:290px;background:#d6d6d6"></div>
<div class="a" style="left:478px;top:39px;width:13px;height:1px;background:#d6d6d6"></div>
<div class="a" style="left:478px;top:39px;width:4px;height:3px;background:#1a85ff"></div>
<div class="a" style="left:491px;top:34px;width:1px;height:295px;background:#d6d6d6"></div>
<svg style="left:503px;top:38px" width="14" height="14" viewBox="0 0 14 14"><rect x=".6" y=".6" width="12.8" height="12.8" rx="1.2" fill="none" stroke="#424242" stroke-width="1.1"/><path d="M3 3.5 6 6.5 3 9.5M7 10h4" fill="none" stroke="#424242" stroke-width="1.1"/></svg>
<div class="t" style="left:521px;top:38px;color:#616161">powersh...</div>
<div class="a" style="left:492px;top:56px;width:100px;height:22px;background:#e4e6f1"></div>
<svg style="left:503px;top:60px" width="14" height="14" viewBox="0 0 14 14"><path d="M1 13 7.5 6.5M8 9l4 4M2 2l4 4" fill="none" stroke="#424242" stroke-width="1.6" stroke-linecap="round"/><path d="M7 5.5a3.5 3.5 0 0 1 5-4.5l-2 2 .8 1.3 1.2.7 2-2a3.5 3.5 0 0 1-4.5 5" fill="none" stroke="#424242" stroke-width="1.1"/></svg>
<div class="t" style="left:521px;top:60px;color:#616161">eide....</div>
<svg style="left:568px;top:62px" width="12" height="10" viewBox="0 0 12 10"><path d="M.5 5.5 4 9 11.5 .5" fill="none" stroke="#8a8a8a" stroke-width="1.1"/></svg>
<svg style="left:503px;top:83px" width="14" height="14" viewBox="0 0 14 14"><rect x=".6" y=".6" width="12.8" height="12.8" rx="1.2" fill="none" stroke="#424242" stroke-width="1.1"/><path d="M3 3.5 6 6.5 3 9.5M7 10h4" fill="none" stroke="#424242" stroke-width="1.1"/></svg>
<div class="t" style="left:521px;top:82px;color:#616161">gdb-ser...</div>
</div>
<div class="a" id="chat">
<div class="t" style="left:20px;top:12px;color:#333;font-size:12px">聊天</div>
<div class="a" style="left:18px;top:28px;width:26px;height:1px;background:#424242"></div>
<svg style="left:127px;top:12px" width="13" height="13" viewBox="0 0 13 13"><path d="M6.5 0v13M0 6.5h13" stroke="#424242" stroke-width="1.2"/></svg>
<svg style="left:153px;top:12px" width="14" height="14" viewBox="0 0 14 14"><path d="M2.2 4A6 6 0 1 1 1 7.5" fill="none" stroke="#424242" stroke-width="1.2"/><path d="M1.5 1v3.5h3.5" fill="none" stroke="#424242" stroke-width="1.2"/><path d="M7 3.5V7.5l2.5 1.5" fill="none" stroke="#424242" stroke-width="1.2"/></svg>
<svg style="left:179px;top:12px" width="14" height="14" viewBox="0 0 14 14"><path d="M6 .6h2l.4 1.8 1.5.6 1.5-1 1.4 1.4-1 1.5.6 1.5 1.8.4v2l-1.8.4-.6 1.5 1 1.5-1.4 1.4-1.5-1-1.5.6-.4 1.8h-2l-.4-1.8-1.5-.6-1.5 1-1.4-1.4 1-1.5-.6-1.5-1.8-.4v-2l1.8-.4.6-1.5-1-1.5 1.4-1.4 1.5 1 1.5-.6z" fill="none" stroke="#424242" stroke-width="1.1"/><circle cx="7" cy="7" r="2.2" fill="none" stroke="#424242" stroke-width="1.1"/></svg>
<svg style="left:206px;top:17px" width="13" height="3"><circle cx="1.5" cy="1.5" r="1.1" fill="#424242"/><circle cx="6.5" cy="1.5" r="1.1" fill="#424242"/><circle cx="11.5" cy="1.5" r="1.1" fill="#424242"/></svg>
<div class="a" style="left:232px;top:10px;width:1px;height:16px;background:#c8c8c8"></div>
<svg style="left:244px;top:12px" width="13" height="13" viewBox="0 0 13 13"><path d="M.6 4V.6H4M9 .6h3.4V4M12.4 9v3.4H9M4 12.4H.6V9" fill="none" stroke="#424242" stroke-width="1.1"/></svg>
<svg style="left:272px;top:13px" width="10" height="10" viewBox="0 0 10 10"><path d="M0 0 10 10M10 0 0 10" stroke="#424242" stroke-width="1.1"/></svg>
<svg style="left:131px;top:181px" width="42" height="42" viewBox="0 0 42 42"><path d="M16.5 7.5H2.8v21.6h7.2v7.6l7.6-7.6H30" fill="none" stroke="#424242" stroke-width="2.4" stroke-linejoin="round"/><path d="M25.2 0.5999999999999996Q25.89 8.51 33.8 9.2Q25.89 9.89 25.2 17.799999999999997Q24.51 9.89 16.6 9.2Q24.51 8.51 25.2 0.5999999999999996z" fill="#424242"/><path d="M32.8 15.899999999999999Q33.28 21.42 38.8 21.9Q33.28 22.38 32.8 27.9Q32.32 22.38 26.799999999999997 21.9Q32.32 21.42 32.8 15.899999999999999z" fill="#424242"/></svg>
<div class="t" style="left:42px;top:240px;color:#616161;font-size:24px;letter-spacing:-0.9px">使用代理模式生成。</div>
<div class="t" style="left:90px;top:278px;color:#717171;font-size:13px;letter-spacing:-0.2px">AI 答复可能不准确。</div>
<div class="t" style="left:61px;top:302px;color:#717171;font-size:13px;letter-spacing:-0.2px"><span style="color:#006ab1">生成指令</span> 以将 AI 载入代码库。</div>
<div class="a" style="left:16px;top:547px;width:268px;height:92px;background:#fff;border-radius:6px"></div>
<div class="a" style="left:23px;top:554px;width:20px;height:20px;border:1px solid #d8d8d8;border-radius:3px"></div>
<svg style="left:29px;top:557px" width="8" height="14" viewBox="0 0 8 14"><path d="M5.5 4v6.5a1.5 1.5 0 0 1-3 0V3a2.5 2.5 0 0 1 5 0v8a3.5 3.5 0 0 1-7 0V5" fill="none" stroke="#424242" stroke-width="1.1"/></svg>
<div class="a" style="left:47px;top:554px;width:81px;height:20px;border:1px dashed #d0d0d0;border-radius:3px"></div>
<div class="t" style="left:56px;top:558px;font-weight:bold;font-size:12px;color:#3c7ea6">C</div>
<div class="t" style="left:72px;top:558px;font-style:italic;font-size:12px;color:#8a8a8a">main.c</div>
<svg style="left:112px;top:558px" width="10" height="10" viewBox="0 0 10 10"><path d="M5 0v10M0 5h10" stroke="#424242" stroke-width="1.1"/></svg>
<div class="t" style="left:23px;top:585px;color:#8a8a8a;font-size:13px">添加上下文(#)、扩展(@)、命令(/)</div>
<div class="t" style="left:29px;top:615px;color:#616161;font-size:12px">Agent</div>
<svg style="left:63px;top:619px" width="8" height="5" viewBox="0 0 8 5"><path d="M.5.5 4 4 7.5.5" fill="none" stroke="#616161" stroke-width="1"/></svg>
<div class="t" style="left:86px;top:615px;color:#616161;font-size:12px">GPT-5 mini</div>
<svg style="left:145px;top:619px" width="8" height="5" viewBox="0 0 8 5"><path d="M.5.5 4 4 7.5.5" fill="none" stroke="#616161" stroke-width="1"/></svg>
<svg style="left:220px;top:614px" width="14" height="14" viewBox="0 0 14 14"><path d="M1 13 7.5 6.5M8 9l4 4M2 2l4 4" fill="none" stroke="#424242" stroke-width="1.6" stroke-linecap="round"/><path d="M7 5.5a3.5 3.5 0 0 1 5-4.5l-2 2 .8 1.3 1.2.7 2-2a3.5 3.5 0 0 1-4.5 5" fill="none" stroke="#424242" stroke-width="1.1"/></svg>
<svg style="left:245px;top:615px" width="15" height="13" viewBox="0 0 15 13"><path d="M.8.8 14.2 6.5.8 12.2 2.5 6.5z M2.5 6.5h6" fill="none" stroke="#424242" stroke-width="1.1" stroke-linejoin="round"/></svg>
<svg style="left:266px;top:619px" width="8" height="5" viewBox="0 0 8 5"><path d="M.5.5 4 4 7.5.5" fill="none" stroke="#616161" stroke-width="1"/></svg>
</div>
<div class="a" id="status">
<div class="a" style="left:0;top:0;width:34px;height:22px;background:#16825d"></div>
<svg style="left:12px;top:4px" width="11" height="14" viewBox="0 0 11 14"><path d="M.5 4 5 8.2.5 12.5M9.8 1 5.5 5l4.3 4" fill="none" stroke="#fff" stroke-width="1.3"/></svg>
<svg style="left:42px;top:5px" width="12" height="12" viewBox="0 0 12 12"><circle cx="6" cy="6" r="5.3" fill="none" stroke="#fff" stroke-width="1.3"/><path d="M3.8 3.8l4.4 4.4M8.2 3.8 3.8 8.2" stroke="#fff" stroke-width="1.3"/></svg>
<div class="t" style="left:58px;top:6px;color:#fff;font-size:12px;-webkit-text-stroke:0.25px #fff">0</div>
<svg style="left:71px;top:5px" width="12" height="12" viewBox="0 0 12 12"><path d="M6 .8 11.3 11H.7z" fill="none" stroke="#fff" stroke-width="1.3" stroke-linejoin="round"/><path d="M6 4.5v3.5M6 9v1" stroke="#fff" stroke-width="1.3"/></svg>
<div class="t" style="left:86px;top:6px;color:#fff;font-size:12px;-webkit-text-stroke:0.25px #fff">0</div>
<svg style="left:97px;top:5px" width="12" height="12" viewBox="0 0 12 12"><circle cx="6" cy="6" r="5.3" fill="none" stroke="#fff" stroke-width="1.3"/><path d="M6 5v4M6 3v1.2" stroke="#fff" stroke-width="1.2"/></svg>
<div class="t" style="left:114px;top:6px;color:#fff;font-size:12px;-webkit-text-stroke:0.25px #fff">2</div>
<svg style="left:135px;top:5px" width="14" height="13" viewBox="0 0 14 13"><path d="M5 .8l8 5.7-6 4" fill="none" stroke="#fff" stroke-width="1.3"/><path d="M2.5 7.5a2 2 0 0 1 4 0v2.5a2 2 0 0 1-4 0z M1 8.5h1.5M6.5 8.5H8M1 11h1.5M6.5 11H8" fill="none" stroke="#fff" stroke-width="1"/></svg>
<div class="t" style="left:153px;top:6px;color:#fff;font-size:12px;-webkit-text-stroke:0.25px #fff">Debug: OpenOCD (EIDE-Project)</div>
<div class="t" style="left:341px;top:6px;color:#fff;font-size:12px;-webkit-text-stroke:0.25px #fff">clangd: idle</div>
<div class="t" style="left:417px;top:6px;color:#fff;font-size:12px;-webkit-text-stroke:0.25px #fff">Git Graph</div>
<div class="t" style="left:484px;top:6px;color:#fff;font-size:12px;-webkit-text-stroke:0.25px #fff">EIDE Project: Debug</div>
<svg style="left:605px;top:5px" width="13" height="13" viewBox="0 0 14 14"><path d="M1 13 7.5 6.5M8 9l4 4M2 2l4 4" fill="none" stroke="#fff" stroke-width="1.8" stroke-linecap="round"/><path d="M7 5.5a3.5 3.5 0 0 1 5-4.5l-2 2 .8 1.3 1.2.7 2-2a3.5 3.5 0 0 1-4.5 5" fill="none" stroke="#fff" stroke-width="1.3"/></svg>
<div class="t" style="left:622px;top:6px;color:#fff;font-size:12px;-webkit-text-stroke:0.25px #fff">Build</div>
<svg style="left:666px;top:5px" width="11" height="12" viewBox="0 0 11 12"><path d="M5.5 0v11M1 6.5 5.5 11 10 6.5" fill="none" stroke="#fff" stroke-width="1.2"/></svg>
<div class="t" style="left:682px;top:6px;color:#fff;font-size:12px;-webkit-text-stroke:0.25px #fff">Flash</div>
<div class="t" style="left:845px;top:6px;color:#fff;font-size:12px;-webkit-text-stroke:0.25px #fff">行 16，列 1</div>
<div class="t" style="left:922px;top:6px;color:#fff;font-size:12px;-webkit-text-stroke:0.25px #fff">空格: 2</div>
<div class="t" style="left:976px;top:6px;color:#fff;font-size:12px;-webkit-text-stroke:0.25px #fff">UTF-8</div>
<div class="t" style="left:1024px;top:6px;color:#fff;font-size:12px;-webkit-text-stroke:0.25px #fff">CRLF</div>
<div class="t" style="left:1066px;top:6px;color:#fff;font-size:12px;-webkit-text-stroke:0.25px #fff">{ }&nbsp; C</div>
<svg style="left:1108px;top:4px" width="16" height="14" viewBox="0 0 16 14"><circle cx="5" cy="4" r="3.3" fill="#fff"/><circle cx="11" cy="4" r="3.3" fill="#fff"/><path d="M2 7.5h12c1.5 1 2 2 2 3 0 2-3.5 3-8 3s-8-1-8-3c0-1 .5-2 2-3z" fill="#fff"/><circle cx="5" cy="3.8" r="1.5" fill="#007acc"/><circle cx="11" cy="3.8" r="1.5" fill="#007acc"/><path d="M4.3 8.3h7.4v3.5H4.3z" fill="#007acc"/><path d="M5.8 8.8h1.5v2h-1.5zM8.7 8.8h1.5v2h-1.5z" fill="#fff"/></svg>
<svg style="left:1140px;top:5px" width="12" height="12" viewBox="0 0 12 12"><circle cx="6" cy="6" r="5.3" fill="none" stroke="#fff" stroke-width="1.3"/><path d="M2.3 9.7 9.7 2.3" stroke="#fff" stroke-width="1.3"/></svg>
<div class="t" style="left:1155px;top:6px;color:#fff;font-size:12px;-webkit-text-stroke:0.25px #fff">Prettier</div>
<svg style="left:1212px;top:4px" width="14" height="14" viewBox="0 0 14 14"><path d="M6.5 2C4 2 3 4 3 6v3.5L1.5 11h11L11 9.5V7" fill="none" stroke="#fff" stroke-width="1.3"/><path d="M5 12.5a1.5 1.5 0 0 0 3 0z" fill="#fff"/><circle cx="10.5" cy="3" r="2.6" fill="#fff"/></svg>
</div>
<div class="a" style="left:0;top:0;width:1240px;height:712px;border-radius:8px;border:1px solid #8c8c8c;box-shadow:0 0 0 6px #70757b;pointer-events:none;z-index:50"></div>
</body></html>
